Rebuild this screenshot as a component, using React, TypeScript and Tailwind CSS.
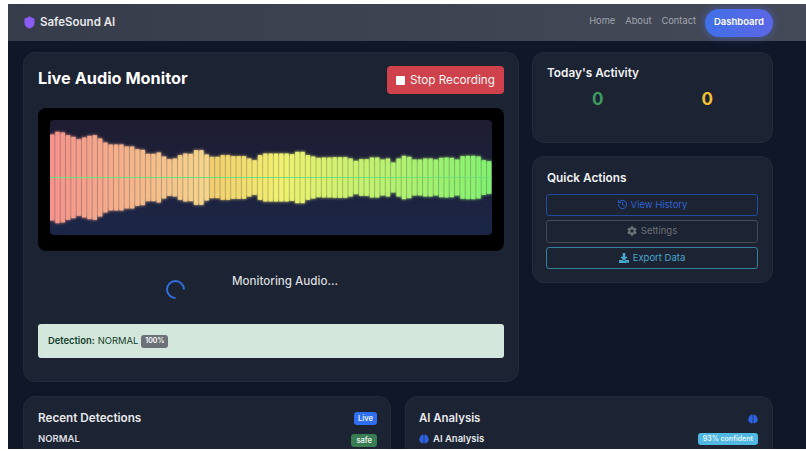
import React from 'react';
import { Shield, History } from 'lucide-react';
import { FaBrain, FaCog, FaDownload } from 'react-icons/fa';

// half heights of the wave, read off the picture (px from centre line)
const wave = [
  129, 137, 135, 127, 122, 115, 120, 125, 127, 117, 105, 99, 99, 99, 93, 93, 85, 83, 71, 71, 75, 63, 55, 57, 67, 72, 71,
  82, 82, 69, 62, 62, 67, 67, 64, 64, 64, 57, 52, 67, 72, 72, 72, 72, 72, 70, 77, 77, 67, 63, 59, 60, 60, 61, 61, 61, 57,
  50, 55, 55, 60, 60, 54, 57, 45, 57, 65, 62, 54, 54, 57, 57, 54, 59, 60, 59, 54, 64, 65, 65, 63, 52, 49,
].map((v) => v / 3);

const Waveform: React.FC = () => (
  <svg viewBox="0 0 442 115" className="block h-full w-full">
    <defs>
      <filter id="glow" x="-5%" y="-20%" width="110%" height="140%">
        <feGaussianBlur stdDeviation="1.4" result="b" />
        <feMerge>
          <feMergeNode in="b" />
          <feMergeNode in="SourceGraphic" />
        </feMerge>
      </filter>
    </defs>
    <g filter="url(#glow)">
      {wave.map((h, i) => (
        <rect
          key={i}
          x={i * 5.33}
          y={57.5 - h}
          width={4.3}
          height={h * 2}
          fill={`hsl(${5 + (i / wave.length) * 107}, 82%, ${i < 30 ? 75 : 69}%)`}
        />
      ))}
    </g>
    <line x1="0" x2="442" y1="57.5" y2="57.5" stroke="#6fe07c" strokeWidth="1" />
  </svg>
);

const Card: React.FC<{ className?: string; children: React.ReactNode }> = ({ className, children }) => (
  <div className={`rounded-xl border border-[#232a39] bg-[#1c2332] ${className ?? ''}`}>{children}</div>
);

export default function App() {
  return (
    <div className="h-[451px] w-[806px] overflow-hidden bg-white pb-[2px] pl-2 pt-1 font-['Inter',sans-serif]">
      <div className="h-full overflow-hidden bg-[#0f1729]">
        {/* Navbar */}
        <nav className="flex h-[37px] items-center justify-between bg-gradient-to-r from-[#363c49] to-[#454a58] pl-[15px] pr-[33px]">
          <div className="flex items-center gap-[4px]">
            <Shield size={13} strokeWidth={2.5} className="fill-[#8b5cf6] text-[#8b5cf6]" />
            <span className="text-[11.5px] font-semibold text-[#e6e7ea]">SafeSound AI</span>
          </div>
          <div className="flex items-center">
            <a className="mb-[4px] mr-[10px] text-[9.3px] text-[#a0a4ad]">Home</a>
            <a className="mb-[4px] mr-[10px] text-[9.3px] text-[#a0a4ad]">About</a>
            <a className="mb-[4px] mr-[9px] text-[9.3px] text-[#a0a4ad]">Contact</a>
            <a className="flex h-[28px] w-[68px] items-center justify-center rounded-full bg-gradient-to-r from-[#3f70e8] to-[#5b66e6] text-[9.5px] font-semibold text-white shadow-[0_0_8px_rgba(80,110,235,0.55)]">
              Dashboard
            </a>
          </div>
        </nav>

        <main className="pl-[15px] pr-[33px] pt-[11px]">
          <div className="flex gap-[13px]">
            {/* Live monitor */}
            <Card className="h-[330px] w-[496px] px-[14px] pt-[13px]">
              <div className="flex h-[28px] items-center justify-between">
                <h1 className="mb-[3px] text-[16.3px] font-bold text-white">Live Audio Monitor</h1>
                <button className="flex h-[28px] w-[117px] items-center justify-center gap-[5px] rounded-[4px] bg-[#d0424b] pt-[1px] text-[11.7px] text-[#f6f6f6]">
                  <span className="mb-[1px] h-[9px] w-[9px] rounded-[1px] bg-white" />
                  Stop Recording
                </button>
              </div>
              <div className="mt-[14px] h-[143px] rounded-lg bg-black p-3">
                <div className="h-[115px] rounded-sm bg-gradient-to-b from-[#1e1c31] to-[#1b2647]">
                  <Waveform />
                </div>
              </div>
              <div className="flex h-[73px] items-start gap-[47px] pl-[128px] pt-[22px]">
                <span className="mt-[7px] h-[19px] w-[19px] rotate-45 rounded-full border-2 border-[#2f6fdb] border-r-transparent" />
                <span className="text-[11.6px] font-medium text-[#d9dbdf]">Monitoring Audio...</span>
              </div>
              <div className="flex h-[34px] items-center rounded-[3px] bg-[#d4e7dc] px-[10px] pt-[1px] text-[9.4px] text-[#123c2b]">
                <b className="font-semibold">Detection:</b>
                <span className="ml-[3px]">NORMAL</span>
                <span className="ml-[3px] rounded-[3px] bg-[#6c7077] px-[4px] py-[1px] text-[7px] font-semibold text-white">
                  100%
                </span>
              </div>
            </Card>

            {/* Side column */}
            <div className="flex w-[241px] flex-col gap-[13px]">
              <Card className="h-[91px] px-[14px] pt-[12px]">
                <h2 className="text-[11.8px] font-semibold text-[#f0f1f3]">Today's Activity</h2>
                <div className="mt-[6px] flex justify-between px-[45px] text-[17px] font-bold leading-[20px]">
                  <span className="text-[#3d9a5f]">0</span>
                  <span className="text-[#f0c035]">0</span>
                </div>
              </Card>
              <Card className="h-[127px] pl-[13px] pr-[14px] pt-[13px]">
                <h2 className="ml-px text-[11.8px] font-semibold text-[#f0f1f3]">Quick Actions</h2>
                <div className="mt-[6px] flex flex-col gap-[4px] text-[9.5px]">
                  <button className="flex h-[22.5px] items-center justify-center gap-[3px] rounded-[3px] border border-[#234a9c] text-[#2f62d6]">
                    <History size={11} />
                    View History
                  </button>
                  <button className="flex h-[22.5px] items-center justify-center gap-[4px] rounded-[3px] border border-[#454a52] text-[#6b7077]">
                    <FaCog size={10} />
                    Settings
                  </button>
                  <button className="flex h-[22.5px] items-center justify-center gap-[4px] rounded-[3px] border border-[#37809c] text-[#4aa9cf]">
                    <FaDownload size={10} />
                    Export Data
                  </button>
                </div>
              </Card>
            </div>
          </div>

          {/* Bottom row */}
          <div className="mt-[14px] grid grid-cols-2 gap-[14px]">
            <Card className="h-[80px] pl-[14px] pr-[13px] pt-[13px]">
              <div className="flex items-center justify-between">
                <h2 className="text-[11.7px] font-semibold text-[#e8e9ec]">Recent Detections</h2>
                <span className="rounded-[3px] bg-[#2f6ef0] px-[4px] py-[1px] text-[7.5px] font-semibold text-[#eef2fb]">Live</span>
              </div>
              <div className="mt-[4px] flex items-start justify-between">
                <span className="text-[9.5px] font-semibold text-[#dcdee2]">NORMAL</span>
                <span className="mt-[2px] rounded-[3px] bg-[#3a7d55] px-[5px] py-[1px] text-[7.5px] font-semibold text-[#e6f0ea]">safe</span>
              </div>
            </Card>
            <Card className="h-[80px] pl-[13px] pr-[14px] pt-[13px]">
              <div className="flex items-center justify-between">
                <h2 className="text-[11.4px] font-semibold text-[#e8e9ec]">AI Analysis</h2>
                <FaBrain size={10} className="text-[#2f62e0]" />
              </div>
              <div className="mt-[5px] flex items-center justify-between">
                <span className="flex items-center gap-[4px] text-[9.5px] font-semibold text-[#e4e6ea]">
                  <FaBrain size={10} className="text-[#2f62e0]" />
                  AI Analysis
                </span>
                <span className="rounded-[3px] bg-[#50b8e2] px-[5px] py-[1px] text-[7px] font-semibold text-[#e4f3fa]">
                  93% confident
                </span>
              </div>
            </Card>
          </div>
        </main>
      </div>
    </div>
  );
}
